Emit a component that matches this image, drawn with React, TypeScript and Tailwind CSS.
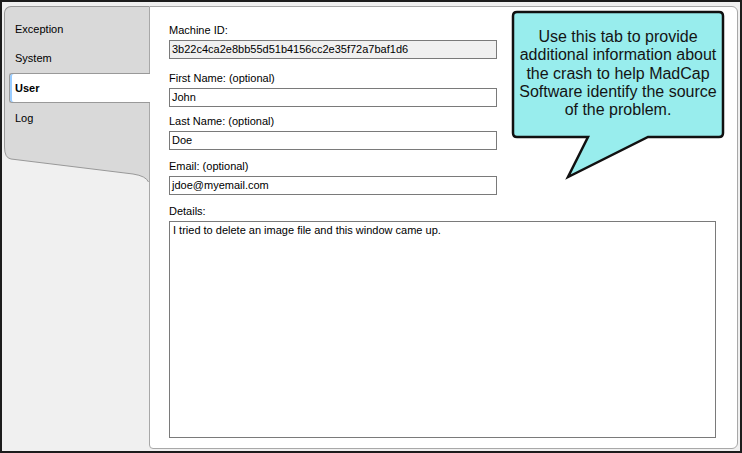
import React from 'react';

const font = { fontFamily: '"Liberation Sans", Arial, sans-serif' };

const Field: React.FC<{ label: string; value: string; readOnly?: boolean; top: string }> = ({ label, value, readOnly, top }) => (
  <div className={top}>
    <div className="h-[13px] leading-[13px] text-[11px] text-black">{label}</div>
    <div
      className={`mt-[3px] w-[328px] h-[19px] border border-[#7a7a7a] pl-[2px] text-[11px] leading-[17px] text-black ${
        readOnly ? 'bg-[#f0f0f0]' : 'bg-white'
      }`}
    >
      {value}
    </div>
  </div>
);

const Tabs: React.FC = () => {
  const tabs = ['Exception', 'System', 'User', 'Log'];
  return (
    <div className="w-[145px] shrink-0 flex flex-col relative z-10">
      <div className="h-[140px] bg-[#d9d9d9] border-l border-t border-[#999] rounded-tl-[7px] pt-[7px]">
        {tabs.map((t, i) =>
          t === 'User' ? (
            <div
              key={t}
              className="ml-[4px] -mr-px h-[30px] flex items-center bg-white border border-r-0 border-[#999] rounded-l-[3px] shadow-[inset_2px_0_0_#9cf] pl-[5px] text-[11px] font-bold text-black"
            >
              {t}
            </div>
          ) : (
            <div key={t} className={`${i === 1 ? 'h-[29px]' : 'h-[30px]'} flex items-center pl-[10px] text-[11px] text-black`}>
              {t}
            </div>
          )
        )}
      </div>
      <svg width="145" height="38" className="block">
        <path d="M0,0 L0.5,1 Q0.5,12 7,13 L129,28 Q142,30 144.5,36 L145,36 L145,0 Z" fill="#d9d9d9" />
        <path d="M0.5,0 L0.5,1 Q0.5,12 7,13 L129,28 Q142,30 144.5,36" fill="none" stroke="#999" strokeWidth="1" />
      </svg>
    </div>
  );
};

const App: React.FC = () => {
  return (
    <div style={font} className="w-[742px] h-[453px] relative bg-[#f0f0f0] border-2 border-[#1c1c1c] pl-[2px] pt-[4px] pr-[2px] pb-[2px] flex overflow-hidden">
      <Tabs />
      <div className="flex-1 bg-white border border-[#a8a8a8] rounded-tr-[6px] rounded-br-[6px] rounded-bl-[4px] pl-[19px] pt-[17px]">
        <Field label="Machine ID:" value="3b22c4ca2e8bb55d51b4156cc2e35f72a7baf1d6" readOnly top="" />
        <Field label="First Name: (optional)" value="John" top="mt-[13px]" />
        <Field label="Last Name: (optional)" value="Doe" top="mt-[8px]" />
        <Field label="Email: (optional)" value="jdoe@myemail.com" top="mt-[10px]" />
        <div className="mt-[10px]">
          <div className="h-[13px] leading-[13px] text-[11px] text-black">Details:</div>
          <div className="mt-[3px] w-[547px] h-[217px] border border-[#7a7a7a] bg-white pl-[3px] pt-px text-[11px] leading-[14px] text-black">
            I tried to delete an image file and this window came up.
          </div>
        </div>
      </div>

      {/* callout */}
      <svg width="220" height="176" className="absolute left-[506px] top-[6px] pointer-events-none">
        <path
          d="M9,4 H211 Q215,4 215,8 V125 Q215,129 211,129 H140 L60,169 L80,129 H9 Q5,129 5,125 V8 Q5,4 9,4 Z"
          fill="#98eded"
          stroke="#111"
          strokeWidth="2.5"
          strokeLinejoin="miter"
        />
      </svg>
      <div className="absolute left-[511px] top-[26px] w-[210px] text-center text-[16px] leading-[18.3px] text-[#141414] whitespace-nowrap">
        Use this tab to provide
        <br />
        additional information about
        <br />
        the crash to help MadCap
        <br />
        Software identify the source
        <br />
        of the problem.
      </div>
    </div>
  );
};

export default App;
